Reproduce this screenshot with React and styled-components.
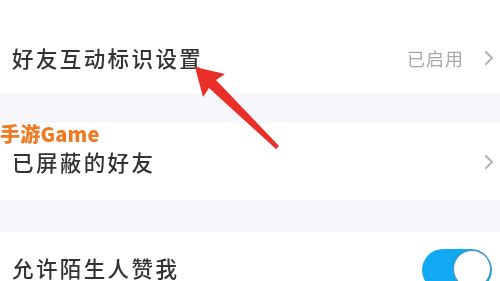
import React from "react";
import styled, { createGlobalStyle } from "styled-components";

const Global = createGlobalStyle`
  html, body { margin: 0; padding: 0; background: #fff; }
  body { width: 500px; height: 281px; overflow: hidden; font-family: "Noto Sans CJK SC", "Noto Sans", sans-serif; }
`;

const Page = styled.div`
  position: relative;
  width: 500px;
  height: 281px;
  overflow: hidden;
  background: #fff;
  display: flex;
  flex-direction: column;
  filter: blur(0.4px);
`;

const Spacer = styled.div`
  height: ${(p) => p.h}px;
  flex: none;
  background: ${(p) => (p.gray ? "#f7f6fb" : "#fff")};
`;

const Row = styled.div`
  height: ${(p) => p.h}px;
  flex: none;
  display: flex;
  align-items: center;
  padding: 0 6px 0 12px;
  background: #fff;
`;

const Label = styled.div`
  flex: 1;
  font-size: 21.5px;
  letter-spacing: 2.4px;
  color: #333336;
  font-weight: 500;
  line-height: 1.1;
`;

const Value = styled.div`
  font-size: 18px;
  color: #a8a8ac;
  letter-spacing: 1px;
  margin-right: 20px;
  line-height: 1;
`;

const Chevron = styled.svg`
  width: 10px;
  height: 16px;
  flex: none;
`;

const Toggle = styled.div`
  width: 70px;
  height: 42px;
  border-radius: 21px;
  background: #12a8f2;
  position: relative;
  margin-right: 2px;
  margin-top: 4px;
  flex: none;
`;

const Knob = styled.div`
  position: absolute;
  right: 1px;
  top: 1px;
  width: 38px;
  height: 38px;
  border-radius: 50%;
  background: #fff;
  border: 1px solid #5a8fa8;
  box-sizing: border-box;
`;

const Watermark = styled.div`
  position: absolute;
  left: 0;
  top: 124px;
  font-family: "Noto Sans CJK SC", "Noto Sans", sans-serif;
  font-weight: 900;
  font-size: 20px;
  color: #f07a22;
  line-height: 1;
  letter-spacing: 0.2px;
`;

const Arrow = styled.svg`
  position: absolute;
  left: 0;
  top: 0;
  width: 500px;
  height: 281px;
  pointer-events: none;
`;

const ChevronIcon = () => (
  <Chevron viewBox="0 0 10 16">
    <path d="M2 2 L8 8 L2 14" fill="none" stroke="#b4b4b8" strokeWidth="2.2" strokeLinecap="round" strokeLinejoin="round" />
  </Chevron>
);

export default function App() {
  return (
    <>
      <Global />
      <Page>
        <Spacer h={23} />
        <Row h={70}>
          <Label>好友互动标识设置</Label>
          <Value>已启用</Value>
          <ChevronIcon />
        </Row>
        <Spacer h={30} gray />
        <Row h={77}>
          <Label>已屏蔽的好友</Label>
          <ChevronIcon />
        </Row>
        <Spacer h={32} gray />
        <Row h={72}>
          <Label>允许陌生人赞我</Label>
          <Toggle>
            <Knob />
          </Toggle>
        </Row>
        <Watermark>手游Game</Watermark>
        <Arrow viewBox="0 0 500 281">
          <path
            d="M195 67 L225 74 L216 80 L279 146 L276 149 L209 88 L203 97 Z"
            fill="#ea2f28"
          />
        </Arrow>
      </Page>
    </>
  );
}
